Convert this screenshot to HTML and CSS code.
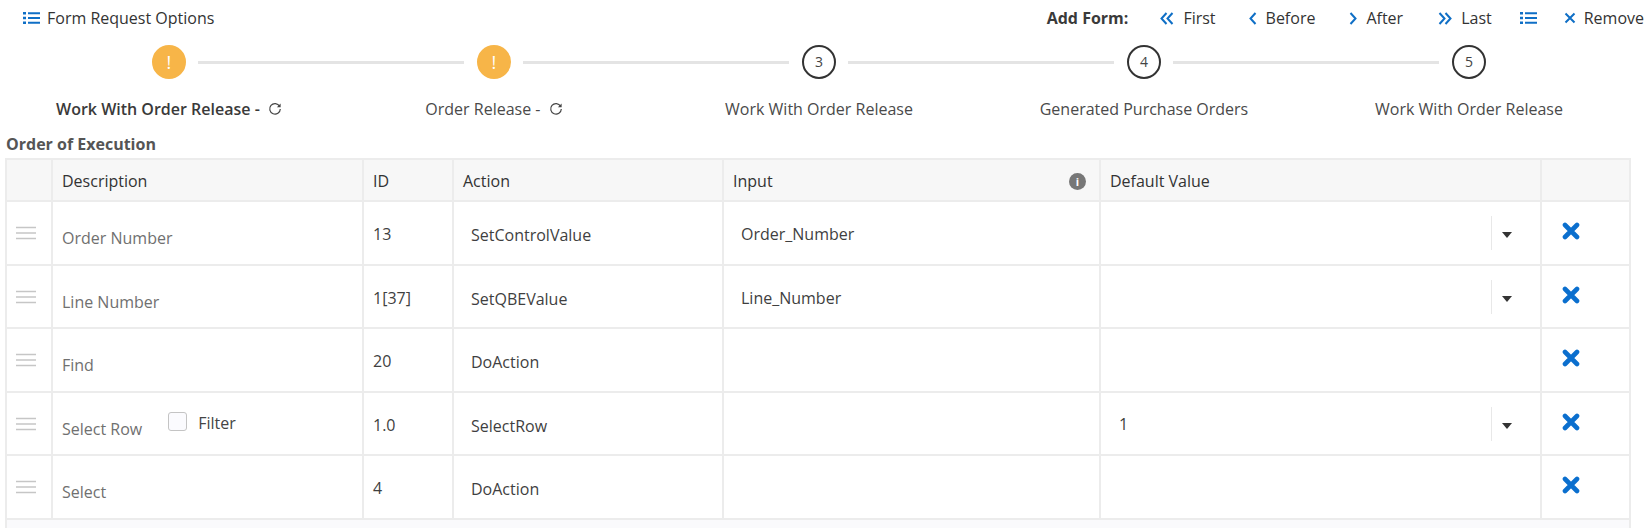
FILE: index.html
```html
<!DOCTYPE html>
<html lang="en">
<head>
<meta charset="utf-8">
<title>Form Request Options</title>
<link rel="stylesheet" href="styles.css">
</head>
<body>
<svg class="defs" width="0" height="0" aria-hidden="true">
  <symbol id="list" viewBox="0 0 17 14"><path d="M5 2.200h12M5 7h12M5 11.800h12" fill="none" stroke="currentColor" stroke-width="2"/><path d="M0 1h3v2.400H0zM0 5.800h3v2.400H0zM0 10.600h3V13H0z" fill="currentColor"/></symbol>
  <symbol id="x-thin" viewBox="0 0 12 12"><path d="M1.500 1.500l9 9M10.500 1.500l-9 9" fill="none" stroke="currentColor" stroke-width="2"/></symbol>
  <symbol id="x-bold" viewBox="0 0 18 18"><path d="M3 3l12 12M15 3L3 15" fill="none" stroke="currentColor" stroke-width="4.600" stroke-linecap="round"/></symbol>
  <symbol id="grip" viewBox="0 0 20 14"><path d="M0 1.500h20M0 7h20M0 12.500h20" fill="none" stroke="currentColor" stroke-width="1.700"/></symbol>
  <symbol id="refresh" viewBox="0 0 14 14"><path d="M11.600 4.200A5.300 5.300 0 1 0 12.300 7" fill="none" stroke="currentColor" stroke-width="1.200"/><path d="M12.600 1.400v3.800H8.900z" fill="currentColor"/></symbol>
</svg>

<header class="topbar">
  <div class="tool">
    <svg class="ic-list"><use href="#list"/></svg><span>Form Request Options</span>
  </div>
  <nav class="addform">
    <strong class="add-label">Add Form:</strong>
    <span class="act first"><svg class="ic-chev2" viewBox="0 0 14 13"><path d="M6.500 1L1.500 6.500l5 5.500M12.500 1l-5 5.500 5 5.500" fill="none" stroke="currentColor" stroke-width="2"/></svg>First</span>
    <span class="act before"><svg class="ic-chev" viewBox="0 0 8 13"><path d="M6.500 1L1.500 6.500l5 5.500" fill="none" stroke="currentColor" stroke-width="2"/></svg>Before</span>
    <span class="act after"><svg class="ic-chev" viewBox="0 0 8 13"><path d="M1.500 1l5 5.500-5 5.500" fill="none" stroke="currentColor" stroke-width="2"/></svg>After</span>
    <span class="act last"><svg class="ic-chev2" viewBox="0 0 14 13"><path d="M1.500 1l5 5.500-5 5.500M7.500 1l5 5.500-5 5.500" fill="none" stroke="currentColor" stroke-width="2"/></svg>Last</span>
    <svg class="ic-list solo"><use href="#list"/></svg>
    <span class="act remove"><svg class="ic-x"><use href="#x-thin"/></svg>Remove</span>
  </nav>
</header>

<ol class="stepper">
  <li class="step">
    <span class="dot warn">!</span>
    <span class="label strong">Work With Order Release - <svg class="ic-refresh"><use href="#refresh"/></svg></span>
  </li>
  <li class="step">
    <span class="dot warn">!</span>
    <span class="label">Order Release - <svg class="ic-refresh"><use href="#refresh"/></svg></span>
  </li>
  <li class="step">
    <span class="dot">3</span>
    <span class="label">Work With Order Release</span>
  </li>
  <li class="step">
    <span class="dot">4</span>
    <span class="label">Generated Purchase Orders</span>
  </li>
  <li class="step">
    <span class="dot">5</span>
    <span class="label">Work With Order Release</span>
  </li>
</ol>

<h2 class="section">Order of Execution</h2>

<table class="grid">
  <colgroup>
    <col class="c-grip"><col class="c-desc"><col class="c-id"><col class="c-action"><col class="c-input"><col class="c-default"><col class="c-del">
  </colgroup>
  <thead>
    <tr>
      <th></th>
      <th>Description</th>
      <th>ID</th>
      <th>Action</th>
      <th><div class="th-flex"><span>Input</span><span class="info">i</span></div></th>
      <th>Default Value</th>
      <th></th>
    </tr>
  </thead>
  <tbody>
    <tr>
      <td class="grip"><svg class="ic-grip"><use href="#grip"/></svg></td>
      <td class="desc">Order Number</td>
      <td class="id">13</td>
      <td class="action">SetControlValue</td>
      <td class="input">Order_Number</td>
      <td class="def"><div class="combo"><span class="val"></span><span class="caret-box"><span class="caret"></span></span></div></td>
      <td class="del"><svg class="ic-del"><use href="#x-bold"/></svg></td>
    </tr>
    <tr>
      <td class="grip"><svg class="ic-grip"><use href="#grip"/></svg></td>
      <td class="desc">Line Number</td>
      <td class="id">1[37]</td>
      <td class="action">SetQBEValue</td>
      <td class="input">Line_Number</td>
      <td class="def"><div class="combo"><span class="val"></span><span class="caret-box"><span class="caret"></span></span></div></td>
      <td class="del"><svg class="ic-del"><use href="#x-bold"/></svg></td>
    </tr>
    <tr>
      <td class="grip"><svg class="ic-grip"><use href="#grip"/></svg></td>
      <td class="desc">Find</td>
      <td class="id">20</td>
      <td class="action">DoAction</td>
      <td class="input"></td>
      <td class="def"></td>
      <td class="del"><svg class="ic-del"><use href="#x-bold"/></svg></td>
    </tr>
    <tr>
      <td class="grip"><svg class="ic-grip"><use href="#grip"/></svg></td>
      <td class="desc"><div class="desc-flex"><span>Select Row</span><label class="filter"><span class="check"></span>Filter</label></div></td>
      <td class="id">1.0</td>
      <td class="action">SelectRow</td>
      <td class="input"></td>
      <td class="def"><div class="combo"><span class="val">1</span><span class="caret-box"><span class="caret"></span></span></div></td>
      <td class="del"><svg class="ic-del"><use href="#x-bold"/></svg></td>
    </tr>
    <tr>
      <td class="grip"><svg class="ic-grip"><use href="#grip"/></svg></td>
      <td class="desc">Select</td>
      <td class="id">4</td>
      <td class="action">DoAction</td>
      <td class="input"></td>
      <td class="def"></td>
      <td class="del"><svg class="ic-del"><use href="#x-bold"/></svg></td>
    </tr>
  </tbody>
  <tfoot>
    <tr><td class="foot" colspan="7"></td></tr>
  </tfoot>
</table>
</body>
</html>
```
FILE: styles.css
```css
* { box-sizing: border-box; }
html, body { margin: 0; height: 528px; overflow: hidden; background: #fff; }
body { font-family: "Open Sans", "Noto Sans", sans-serif; font-size: 16px; line-height: 20px; color: #3f3f3f; }
.defs { position: absolute; }

.topbar { display: flex; justify-content: space-between; height: 36px; padding: 8px 6px 0 23px; }
.tool { display: flex; align-items: center; height: 20px; color: #333; }
.ic-list { width: 17px; height: 14px; color: #0f6fc6; margin-right: 7px; flex: none; }
.addform { display: flex; align-items: center; height: 20px; color: #333; }
.add-label { font-weight: 700; margin-right: 32px; color: #3a3a3a; }
.act { display: flex; align-items: center; }
.ic-chev2 { width: 14px; height: 13px; color: #0f6fc6; margin-right: 9px; }
.ic-chev { width: 8px; height: 13px; color: #0f6fc6; margin-right: 9px; }
.ic-x { width: 12px; height: 12px; color: #0f6fc6; margin-right: 8px; }
.first { margin-right: 33px; }
.before { margin-right: 34px; }
.after { margin-right: 35px; }
.last { margin-right: 28px; }
.solo { margin-right: 27px; }

.stepper { list-style: none; margin: 0 0 0 6.5px; padding: 9px 0 0; display: grid; grid-template-columns: repeat(5, 325px); }
.step { position: relative; display: flex; flex-direction: column; align-items: center; }
.step:not(:last-child)::after { content: ""; position: absolute; top: 16px; left: calc(50% + 29px); width: 266px; height: 3px; background: #e4e4e4; }
.dot { width: 34px; height: 34px; border-radius: 50%; border: 2px solid #333; display: flex; align-items: center; justify-content: center; font-size: 14px; color: #444; background: #fff; }
.dot.warn { background: #f7b548; border-color: #f7b548; color: #fff; font-size: 18px; }
.label { margin-top: 18px; height: 24px; line-height: 24px; display: flex; align-items: center; white-space: pre; color: #4a4a4a; }
.label.strong { font-weight: 600; color: #3a3a3a; }
.ic-refresh { width: 14px; height: 14px; color: #444; margin-left: 4px; }

.section { margin: 13px 0 0 6px; height: 24px; font-size: 16px; line-height: 20px; font-weight: 700; color: #555; }

.grid { table-layout: fixed; border-collapse: collapse; width: 1624px; margin-left: 5px; }
.c-grip { width: 46px; }
.c-desc { width: 311px; }
.c-id { width: 90px; }
.c-action { width: 270px; }
.c-input { width: 377px; }
.c-default { width: 441px; }
.c-del { width: 89px; }

.grid th, .grid td { border: 2px solid #ececec; padding: 0; vertical-align: top; }
.grid th { height: 42px; background: #f7f7f7; font-weight: 400; text-align: left; padding: 11px 8px 0 9px; color: #333; }
.grid td { height: 63.5px; }
.th-flex { display: flex; justify-content: space-between; align-items: center; }
.info { width: 17px; height: 17px; border-radius: 50%; background: #777; color: #fff; font-size: 11px; line-height: 17px; font-weight: 700; text-align: center; margin-right: 5px; }

.grid td.grip { padding: 24px 0 0 9px; }
.ic-grip { display: block; width: 20px; height: 14px; color: #c6c6c6; }
.grid td.desc { padding: 26px 8px 0 9px; color: #707070; }
.desc-flex { display: flex; }
.filter { display: flex; align-items: center; align-self: flex-start; margin: -6px 0 0 26px; color: #444; }
.check { width: 19px; height: 19px; border: 1px solid #c4c4c4; border-radius: 3px; background: #fbfbfe; margin: -3px 11px 0 0; }
.grid td.id { padding: 22px 8px 0 9px; }
.grid td.action { padding: 23px 8px 0 17px; }
.grid td.input { padding: 22px 8px 0 17px; }
.combo { display: flex; align-items: center; height: 34px; margin-top: 14px; }
.val { flex: 1; padding-left: 18px; }
.caret-box { width: 49px; height: 34px; border-left: 1px solid #e8e8e8; display: flex; align-items: center; padding: 4px 0 0 10px; }
.caret { width: 0; height: 0; border-left: 5px solid transparent; border-right: 5px solid transparent; border-top: 6px solid #333; }
.grid td.del { padding: 20px 0 0 20px; }
.ic-del { display: block; width: 18px; height: 18px; color: #0b6fce; }
.grid td.foot { height: 9px; background: #fafafc; border-bottom: 0; }
```
